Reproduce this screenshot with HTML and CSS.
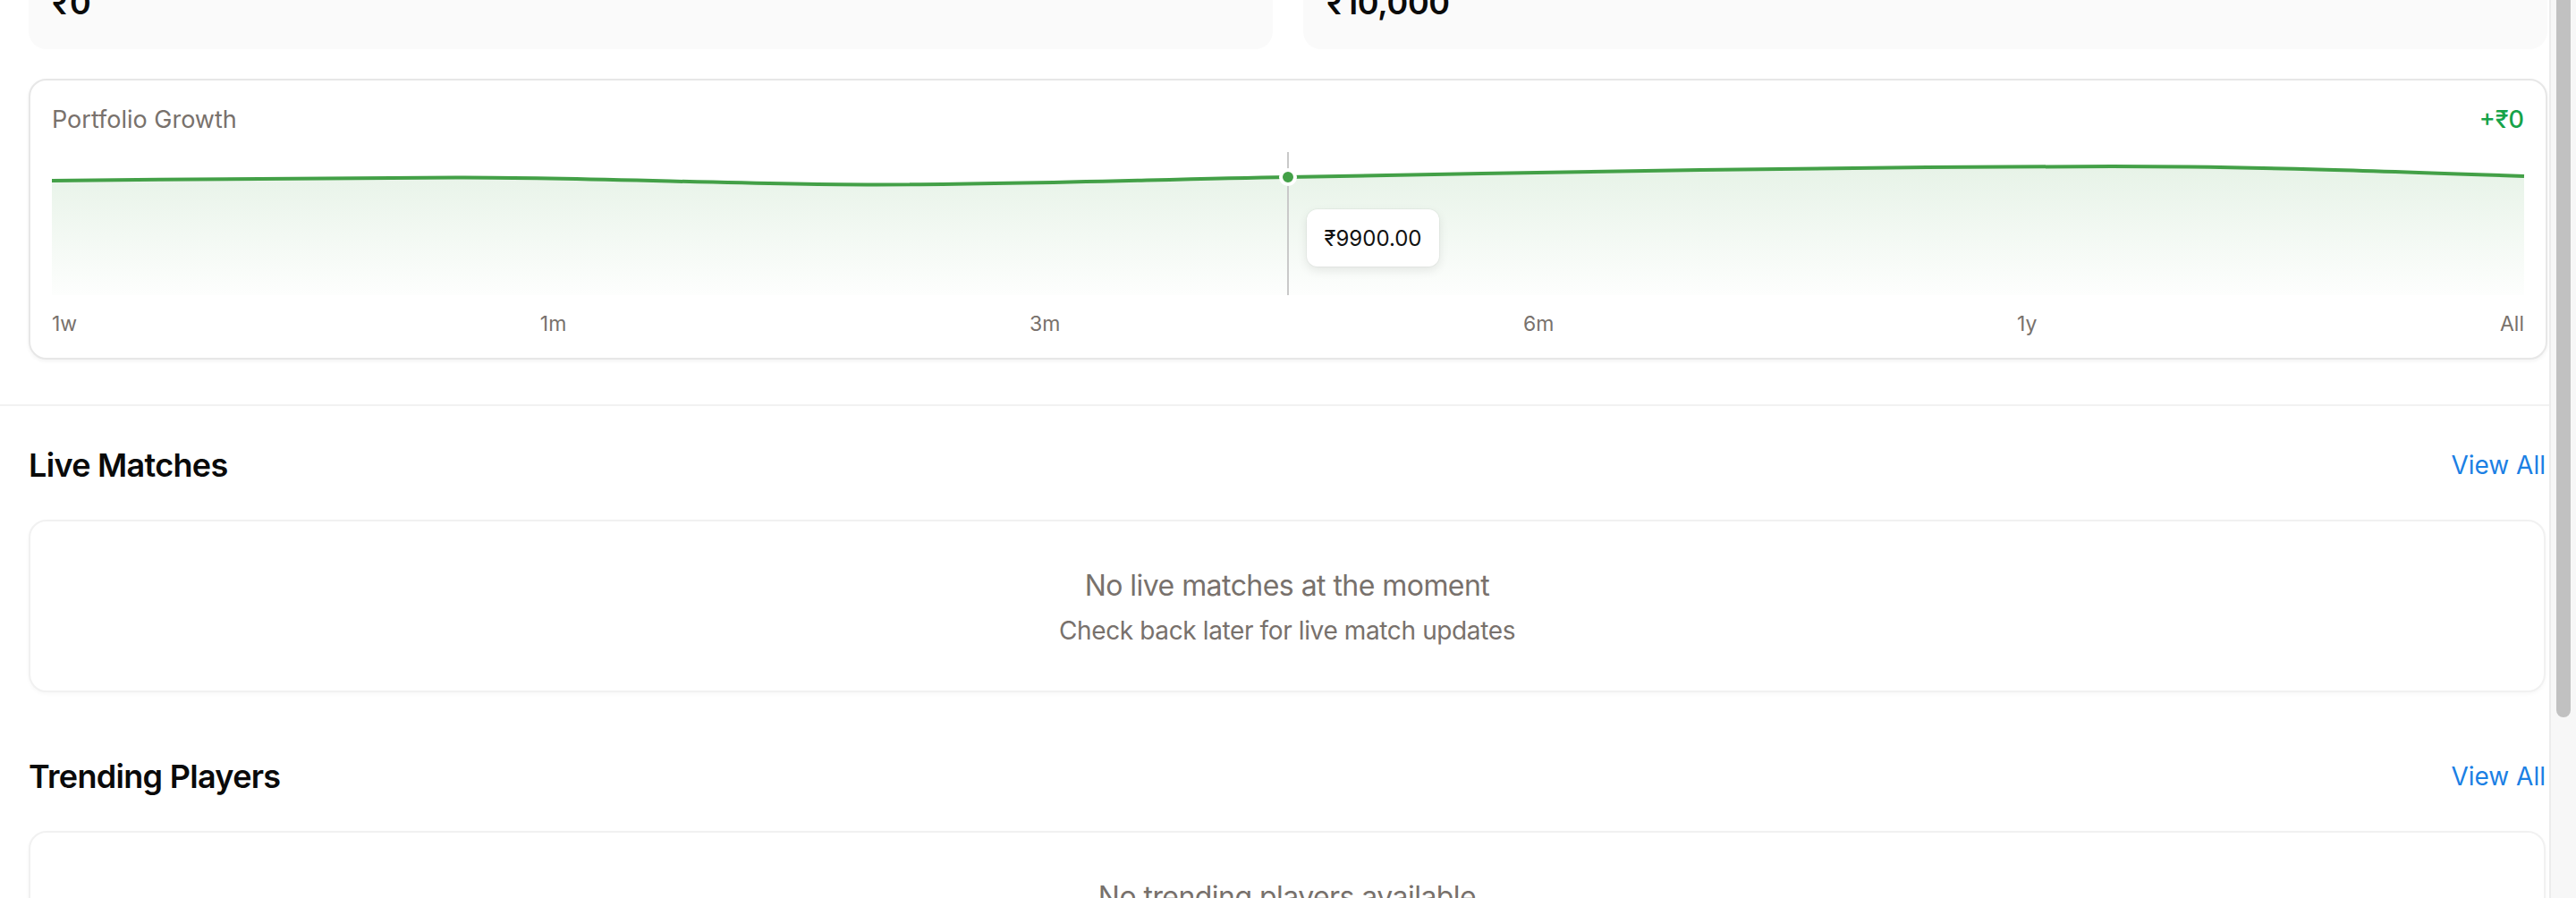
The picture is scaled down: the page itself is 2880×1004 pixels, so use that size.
FILE: index.html
```html
<!DOCTYPE html>
<html lang="en">
<head>
<meta charset="utf-8">
<title>Dashboard</title>
<link rel="stylesheet" href="styles.css">
</head>
<body>
<div class="page">
  <div class="top">
    <div class="stats">
      <div class="stat">
        <div class="stat-label">Total Profit</div>
        <div class="stat-value">₹0</div>
      </div>
      <div class="stat">
        <div class="stat-label">Portfolio Value</div>
        <div class="stat-value">₹10,000</div>
      </div>
    </div>

    <div class="growth-card">
      <div class="growth-head">
        <span class="growth-title">Portfolio Growth</span>
        <span class="growth-change">+₹0</span>
      </div>
      <div class="chart">
        <svg class="chart-svg" viewBox="0 0 2762 160" preserveAspectRatio="none">
          <defs>
            <linearGradient id="fillGrad" x1="0" y1="0" x2="0" y2="1">
              <stop offset="0" stop-color="#43a047" stop-opacity="0.13"/>
              <stop offset="1" stop-color="#43a047" stop-opacity="0.01"/>
            </linearGradient>
          </defs>
          <path d="M0,32 C153.44,30.25 306.89,28.5 460.33,28.5 C613.78,28.5 767.22,36.5 920.67,36.5 C1074.1,36.5 1227.6,30.75 1381,28 C1534.4,25.25 1687.9,22 1841.3,20 C1994.8,18 2148.2,16 2301.7,16 C2455.1,16 2608.6,21.5 2762,27 L2762,160 L0,160 Z" fill="url(#fillGrad)"/>
          <line x1="1381" y1="0" x2="1381" y2="160" stroke="#c9c9c9" stroke-width="2"/>
          <path d="M0,32 C153.44,30.25 306.89,28.5 460.33,28.5 C613.78,28.5 767.22,36.5 920.67,36.5 C1074.1,36.5 1227.6,30.75 1381,28 C1534.4,25.25 1687.9,22 1841.3,20 C1994.8,18 2148.2,16 2301.7,16 C2455.1,16 2608.6,21.5 2762,27" fill="none" stroke="#43a047" stroke-width="4"/>
          <circle cx="1381" cy="28" r="8" fill="#43a047" stroke="#ffffff" stroke-width="4"/>
        </svg>
        <div class="tooltip">₹9900.00</div>
      </div>
      <div class="ranges">
        <span>1w</span>
        <span>1m</span>
        <span>3m</span>
        <span>6m</span>
        <span>1y</span>
        <span>All</span>
      </div>
    </div>
  </div>

  <main class="sections">
    <section class="block">
      <div class="block-head">
        <h2 class="block-title">Live Matches</h2>
        <a class="view-all" href="#">View All</a>
      </div>
      <div class="empty">
        <p class="empty-title">No live matches at the moment</p>
        <p class="empty-sub">Check back later for live match updates</p>
      </div>
    </section>

    <section class="block">
      <div class="block-head">
        <h2 class="block-title">Trending Players</h2>
        <a class="view-all" href="#">View All</a>
      </div>
      <div class="empty">
        <p class="empty-title">No trending players available</p>
        <p class="empty-sub">Check back later for trending player updates</p>
      </div>
    </section>
  </main>
</div>

<div class="scrollbar"><div class="scrollbar-thumb"></div></div>
</body>
</html>
```

FILE: styles.css
```css
* {
  box-sizing: border-box;
}

html, body {
  margin: 0;
  padding: 0;
  background: #ffffff;
}

body {
  font-family: "Inter", "Noto Sans", "Liberation Sans", sans-serif;
  color: #0a0a0a;
  padding-right: 30px;
  overflow: hidden;
}

.page {
  margin-top: -85px;
}

.top {
  padding: 0 2px 50px 32px;
}

.stats {
  display: grid;
  grid-template-columns: 1fr 1fr;
  gap: 34px;
}

.stat {
  background: #fafafa;
  border-radius: 20px;
  padding: 24px 24px 28px 26px;
}

.stat-label {
  font-size: 24px;
  line-height: 32px;
  color: #78716c;
  margin-bottom: 8px;
}

.stat-value {
  font-size: 36px;
  line-height: 48px;
  font-weight: 600;
  letter-spacing: -0.3px;
  color: #0a0a0a;
}

.growth-card {
  margin-top: 33px;
  border: 2px solid #e7e7e7;
  border-radius: 20px;
  padding: 24px;
  background: #ffffff;
  box-shadow: 0 2px 4px rgba(0, 0, 0, 0.05);
}

.growth-head {
  display: flex;
  justify-content: space-between;
  align-items: center;
  height: 40px;
}

.growth-title {
  font-size: 27px;
  line-height: 40px;
  color: #78716c;
}

.growth-change {
  font-size: 27px;
  line-height: 40px;
  color: #16a34a;
  font-weight: 500;
}

.chart {
  position: relative;
  margin-top: 16px;
  height: 160px;
}

.chart-svg {
  display: block;
  width: 100%;
  height: 160px;
  overflow: visible;
}

.tooltip {
  position: absolute;
  left: 1403px;
  top: 64px;
  width: 148px;
  height: 64px;
  display: flex;
  align-items: center;
  justify-content: center;
  background: #ffffff;
  border-radius: 12px;
  font-size: 24px;
  color: #111111;
  box-shadow: 0 4px 12px rgba(0, 0, 0, 0.09), 0 0 0 1px rgba(0, 0, 0, 0.03);
}

.ranges {
  display: flex;
  justify-content: space-between;
  margin-top: 18px;
  font-size: 23px;
  line-height: 28px;
  color: #78716c;
}

.sections {
  border-top: 2px solid #f2f2f2;
  padding: 38px 4px 0 32px;
}

.block + .block {
  margin-top: 66px;
}

.block-head {
  display: flex;
  justify-content: space-between;
  align-items: center;
  height: 56px;
  margin-bottom: 33px;
}

.block-title {
  margin: 0;
  font-size: 36px;
  line-height: 56px;
  font-weight: 600;
  letter-spacing: -0.7px;
  color: #0a0a0a;
}

.view-all {
  font-size: 28px;
  line-height: 40px;
  color: #1b80e4;
  text-decoration: none;
}

.empty {
  border: 2px solid #f1f1f1;
  border-radius: 20px;
  background: #ffffff;
  box-shadow: 0 2px 4px rgba(0, 0, 0, 0.03);
  padding: 48px 24px 47px;
  text-align: center;
}

.empty-title {
  margin: 0;
  font-size: 32px;
  line-height: 48px;
  letter-spacing: -0.55px;
  color: #78716c;
}

.empty-sub {
  margin: 6px 0 0;
  font-size: 28px;
  line-height: 40px;
  letter-spacing: -0.38px;
  color: #78716c;
}

.scrollbar {
  position: fixed;
  top: 0;
  right: 0;
  width: 30px;
  height: 100%;
  background: #f7f7f7;
  border-left: 2px solid #ececec;
}

.scrollbar-thumb {
  margin-left: 6px;
  width: 16px;
  height: 802px;
  background: #c1c1c1;
  border-radius: 0 0 8px 8px;
}
```
